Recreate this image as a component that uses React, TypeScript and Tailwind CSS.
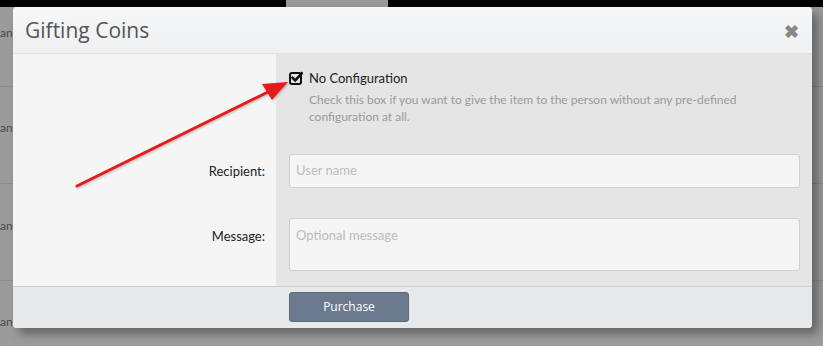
import React from "react";

const rows = [
  { h: "h-[80px]", pt: "pt-[20px]" },
  { h: "h-[97px]", pt: "pt-[35px]" },
  { h: "h-[97px]", pt: "pt-[36px]" },
  { h: "h-[97px]", pt: "pt-[35px]" },
];

function CheckIcon() {
  return (
    <svg width="14" height="14" viewBox="0 0 14 14" aria-hidden="true">
      <rect x="1" y="2" width="11" height="11" rx="2" fill="none" stroke="#111" strokeWidth="2" />
      <path d="M3.6 6.8 L6.2 9.4 L12.8 2.4" fill="none" stroke="#111" strokeWidth="2.6" strokeLinecap="square" />
    </svg>
  );
}

export default function App() {
  return (
    <div className="relative w-[823px] h-[346px] overflow-hidden bg-[#9b9b9b] font-['Lato',sans-serif]">
      {/* page behind the dialog */}
      <div className="flex h-[7px] bg-black">
        <div className="ml-[286px] w-[102px] bg-[#9a9a9a]" />
      </div>
      <div className="flex flex-col">
        {rows.map((r, i) => (
          <div key={i} className={`${r.h} ${r.pt} border-b border-[#8c8c8c] text-[12px] text-[#4a4a4a] leading-none`}>
            <span className="block">ance</span>
          </div>
        ))}
      </div>

      {/* dialog */}
      <div className="absolute left-[13px] top-[7px] w-[799px] h-[321px] rounded-[4px] overflow-hidden bg-[#f5f5f5] shadow-[6px_6px_10px_rgba(0,0,0,0.35)] flex flex-col">
        <div className="h-[47px] shrink-0 flex items-center justify-between px-[12px] bg-gradient-to-b from-[#f6f7f8] to-[#eef0f1] border-b border-[#e0e1e2]">
          <h1 className="text-[21px] text-[#555] font-['Open_Sans',sans-serif] pt-[1px]">Gifting Coins</h1>
          <span className="text-[18px] leading-none text-[#888] font-bold mr-[1px] mt-[2px]">✖</span>
        </div>

        <div className="flex flex-1 min-h-0">
          <div className="w-[263px] shrink-0 bg-[#f5f5f5] flex flex-col items-end pr-[11px] text-[13px] text-[#222]">
            <div className="mt-[108px]">Recipient:</div>
            <div className="mt-[45px]">Message:</div>
          </div>
          <div className="flex-1 bg-[#e5e5e5] pl-[13px] pr-[12px] pt-[17px]">
            <div className="flex items-center gap-[6px] text-[13px] text-[#222] leading-none">
              <CheckIcon />
              <span>No Configuration</span>
            </div>
            <p className="ml-[20px] mt-[6px] text-[12px] leading-[17px] text-[#9a9a9a]">
              Check this box if you want to give the item to the person without any pre-defined configuration at all.
            </p>
            <div className="mt-[29px] h-[34px] rounded-[3px] border border-[#d0d0d0] bg-[#f5f5f5] flex items-center px-[6px] text-[13px] text-[#bcbcbc]">
              User name
            </div>
            <div className="mt-[30px] h-[53px] rounded-[3px] border border-[#d0d0d0] bg-[#f5f5f5] px-[6px] pt-[10px] text-[13px] leading-none text-[#bcbcbc]">
              Optional message
            </div>
          </div>
        </div>

        <div className="h-[42px] shrink-0 border-t border-[#cfcfcf] bg-[#e8e9ea] pl-[276px] pt-[5px]">
          <button className="w-[120px] h-[30px] rounded-[3px] bg-[#6c7a8e] border border-[#5c697b] text-white text-[12px] font-['Open_Sans',sans-serif]">
            Purchase
          </button>
        </div>
      </div>

      {/* annotation arrow */}
      <svg className="absolute left-0 top-0 pointer-events-none" width="823" height="346" aria-hidden="true">
        <defs>
          <filter id="sh" x="-10%" y="-10%" width="120%" height="120%">
            <feDropShadow dx="1" dy="1" stdDeviation="1" floodColor="#000" floodOpacity="0.25" />
          </filter>
        </defs>
        <g filter="url(#sh)">
          <line x1="77" y1="186" x2="268" y2="92" stroke="#e31b1b" strokeWidth="3" strokeLinecap="round" />
          <polygon points="288,82 262,84 267,92 272,100" fill="#e31b1b" />
        </g>
      </svg>
    </div>
  );
}
